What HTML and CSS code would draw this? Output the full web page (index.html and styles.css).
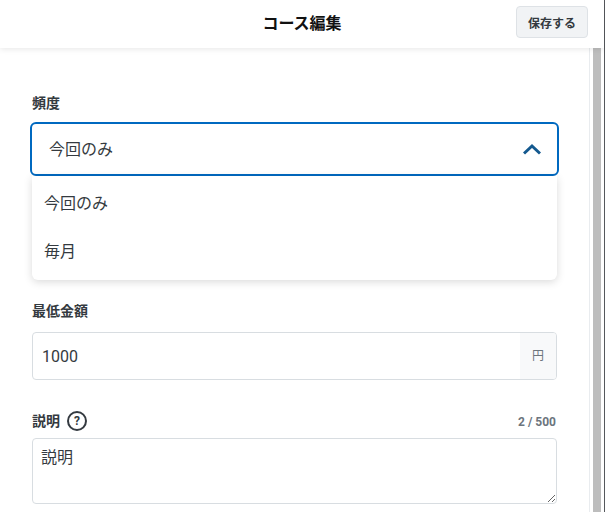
FILE: index.html
```html
<!DOCTYPE html>
<html lang="ja">
<head>
    <meta charset="UTF-8">
    <meta name="viewport" content="width=device-width, initial-scale=1.0">
    <title>コース編集</title>
    <link rel="stylesheet" href="styles.css">
</head>
<body>
    <div class="modal">
        <div class="modal-header">
            <div class="modal-title">コース編集</div>
            <button class="save-button">保存する</button>
        </div>
        <div class="modal-body">
            <div class="form-content">
                <div class="field frequency-field">
                    <div class="field-label">頻度</div>
                    <div class="select-box">
                        <span class="select-value">今回のみ</span>
                        <svg class="chevron" width="18" height="12" viewBox="0 0 18 12">
                            <path d="M1 10.5 L9 3 L17 10.5" fill="none" stroke="#14598f" stroke-width="3"/>
                        </svg>
                    </div>
                    <div class="select-menu">
                        <div class="select-option">今回のみ</div>
                        <div class="select-option">毎月</div>
                    </div>
                </div>
                <div class="field amount-field">
                    <div class="field-label">最低金額</div>
                    <div class="input-group">
                        <div class="input-value">1000</div>
                        <div class="input-suffix">円</div>
                    </div>
                </div>
                <div class="field description-field">
                    <div class="label-row">
                        <div class="field-label">説明</div>
                        <div class="help-icon">?</div>
                        <div class="char-count">2 / 500</div>
                    </div>
                    <textarea class="description-input">説明</textarea>
                </div>
            </div>
            <div class="scrollbar"><div class="scrollbar-thumb"></div></div>
        </div>
    </div>
</body>
</html>
```

FILE: styles.css
```css
html, body {
    height: 100%;
}
body {
    margin: 0;
    overflow: hidden;
    background-color: white;
    color: #343a40;
    font-family: 'Roboto', 'Noto Sans CJK JP', sans-serif;
}
.modal {
    display: flex;
    flex-direction: column;
    width: 604px;
    height: 512px;
    border-right: 1px solid #55585c;
}
.modal-header {
    position: relative;
    z-index: 2;
    display: flex;
    justify-content: center;
    align-items: center;
    height: 48px;
    flex-shrink: 0;
    box-shadow: 0 1px 6px rgba(0, 0, 0, 0.1);
}
.modal-title {
    padding-bottom: 4px;
    font-size: 16px;
    font-weight: bold;
    color: #111;
}
.save-button {
    position: absolute;
    top: 6px;
    right: 16px;
    width: 72px;
    height: 32px;
    padding: 0;
    border: 1px solid #dee2e6;
    border-radius: 4px;
    background-color: #f1f3f5;
    color: #343a40;
    font-family: inherit;
    font-size: 12px;
    font-weight: bold;
}
.modal-body {
    display: flex;
    flex: 1;
    min-height: 0;
}
.form-content {
    flex: 1;
    padding: 46px 32px 0 32px;
}
.scrollbar {
    width: 12px;
    margin-right: 3px;
    border-left: 1px solid #e9ecef;
    box-sizing: border-box;
    padding-left: 3px;
}
.scrollbar-thumb {
    width: 8px;
    height: 100%;
    background-color: #bdbdbd;
}
.field-label {
    font-size: 14px;
    font-weight: bold;
    line-height: 18px;
    color: #343a40;
}
.frequency-field {
    position: relative;
}
.select-box {
    display: flex;
    justify-content: space-between;
    align-items: center;
    box-sizing: border-box;
    height: 54px;
    margin: 10px -2px 0;
    padding: 0 16px 0 17px;
    border: 2px solid #0069c0;
    border-radius: 6px;
    font-size: 16px;
}
.select-value {
    padding-bottom: 3px;
}
.select-menu {
    position: absolute;
    z-index: 1;
    top: 82px;
    left: 0;
    right: 0;
    height: 104px;
    background-color: white;
    border-radius: 0 0 6px 6px;
    box-shadow: 0 2px 8px rgba(0, 0, 0, 0.15);
}
.select-option {
    height: 48px;
    padding-left: 12px;
    font-size: 16px;
    line-height: 56px;
}
.amount-field {
    margin-top: 126px;
}
.input-group {
    display: flex;
    height: 48px;
    box-sizing: border-box;
    margin-top: 12px;
    border: 1px solid #d8dde1;
    border-radius: 4px;
    overflow: hidden;
}
.input-value {
    flex: 1;
    padding-left: 9px;
    font-size: 16px;
    line-height: 48px;
}
.input-suffix {
    width: 36px;
    background-color: #f8f9fa;
    color: #6c757d;
    font-size: 12px;
    line-height: 46px;
    text-align: center;
}
.description-field {
    margin-top: 30px;
}
.label-row {
    display: flex;
    align-items: center;
    height: 22px;
}
.help-icon {
    box-sizing: border-box;
    width: 20px;
    height: 20px;
    margin-left: 7px;
    border: 2px solid #343a40;
    border-radius: 50%;
    font-size: 12px;
    font-weight: bold;
    line-height: 16px;
    text-align: center;
}
.char-count {
    margin-left: auto;
    margin-right: 1px;
    padding-top: 2px;
    color: #6c757d;
    font-size: 12px;
    font-weight: bold;
}
.description-input {
    display: block;
    box-sizing: border-box;
    width: 100%;
    height: 66px;
    margin-top: 6px;
    padding: 5px 8px;
    border: 1px solid #d8dde1;
    border-radius: 4px;
    color: #343a40;
    font-family: inherit;
    font-size: 16px;
    outline: none;
}
```
